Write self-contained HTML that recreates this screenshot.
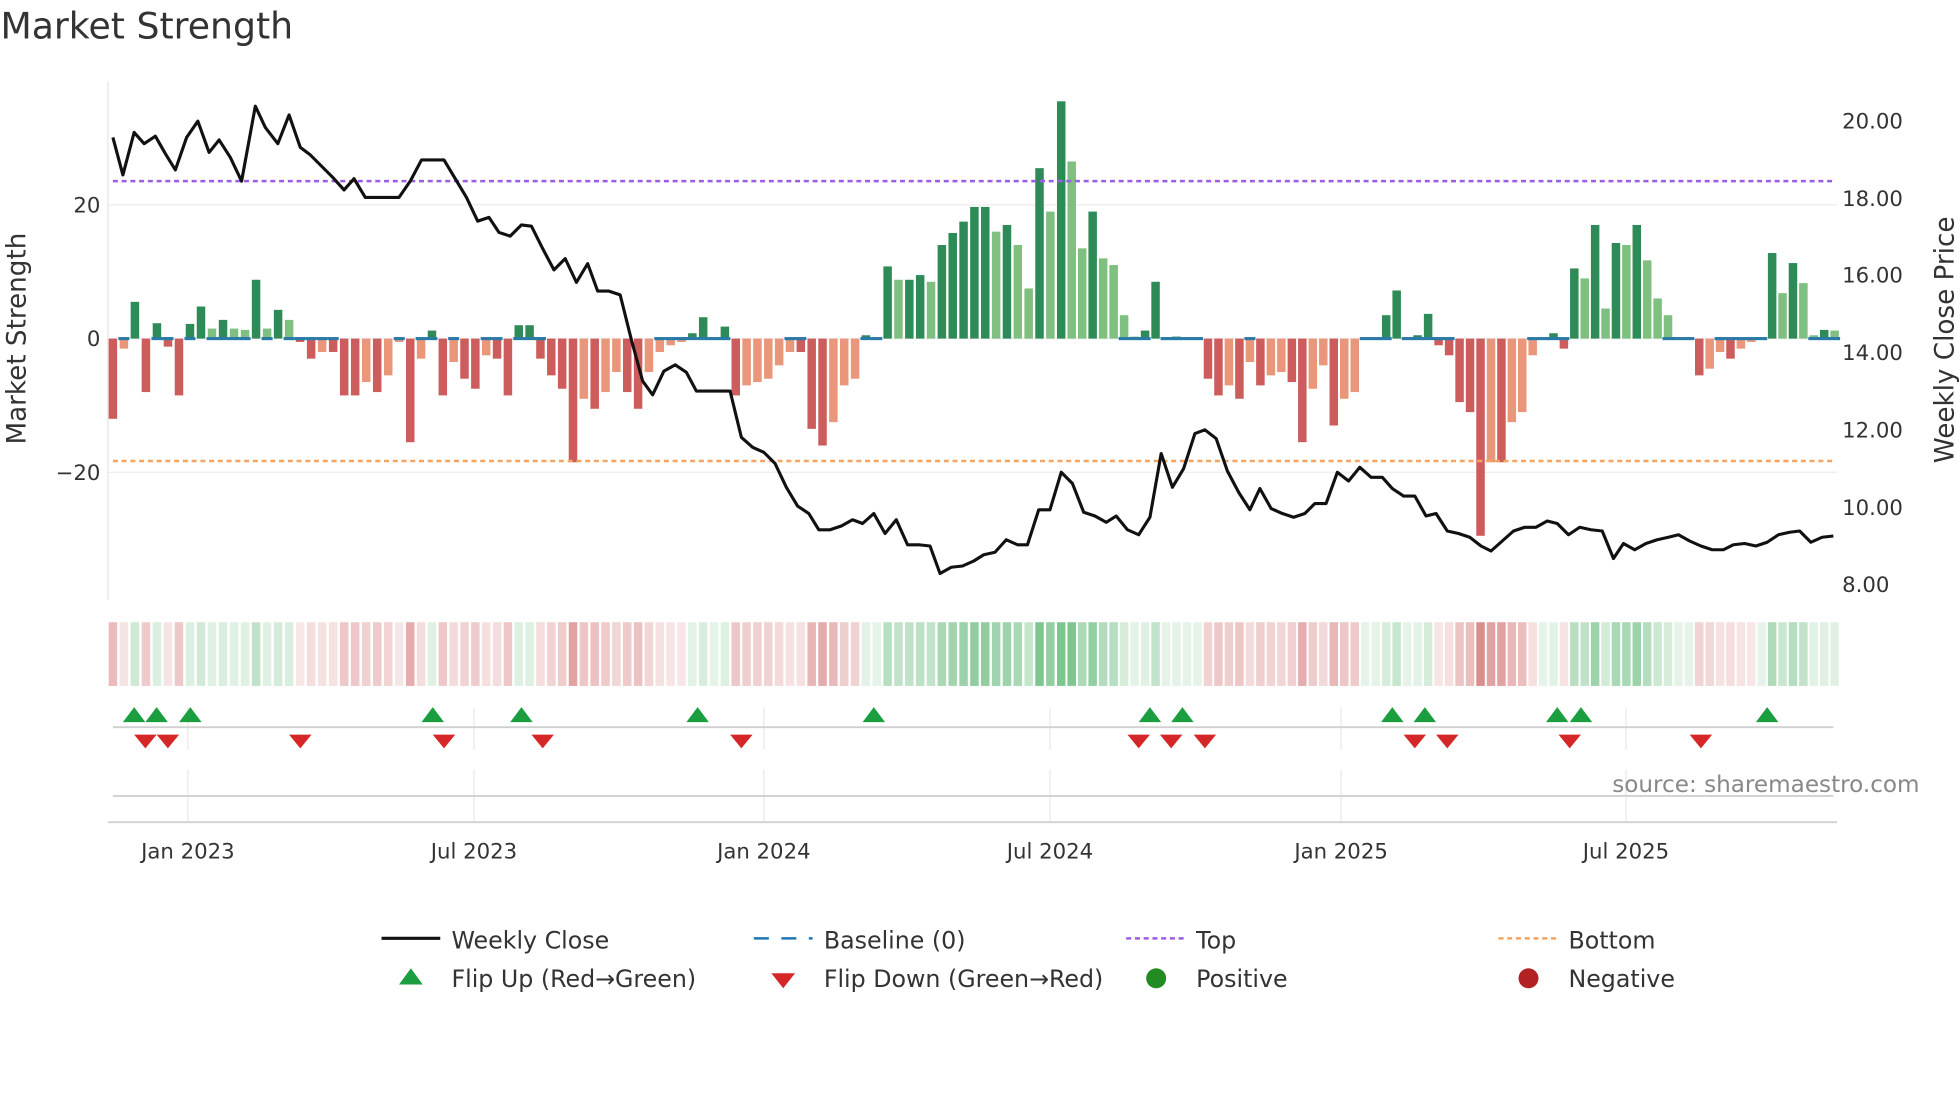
<!DOCTYPE html>
<html><head><meta charset="utf-8"><style>
html,body{margin:0;padding:0;background:#fff;width:1960px;height:1102px;overflow:hidden}
svg{display:block;font-family:"DejaVu Sans","Liberation Sans",sans-serif}
</style></head><body>
<svg id="s" width="1960" height="1102" viewBox="0 0 1568 882" xmlns="http://www.w3.org/2000/svg">
<text x="0" y="31" font-size="29" fill="#333">Market Strength</text>
<line x1="86" y1="65" x2="86" y2="480" stroke="#e6e6e6"/>
<g stroke="#ececec" stroke-width="1"><line x1="86" y1="164" x2="1470" y2="164"/><line x1="86" y1="271" x2="1470" y2="271"/><line x1="86" y1="378" x2="1470" y2="378"/></g>
<g font-size="17" fill="#333" text-anchor="end"><text x="80" y="170">20</text><text x="80" y="277">0</text><text x="80" y="384">−20</text></g>
<g font-size="17" fill="#333"><text x="1474" y="103">20.00</text><text x="1474" y="165">18.00</text><text x="1474" y="226">16.00</text><text x="1474" y="288">14.00</text><text x="1474" y="350">12.00</text><text x="1474" y="412">10.00</text><text x="1474" y="474">8.00</text></g>
<text transform="translate(20,271) rotate(-90)" font-size="21" fill="#333" text-anchor="middle">Market Strength</text>
<text transform="translate(1563,272) rotate(-90)" font-size="21" fill="#333" text-anchor="middle">Weekly Close Price</text>
<g id="bars"></g>
<line x1="90" y1="145" x2="1468" y2="145" stroke="#9b5de5" stroke-width="2" stroke-dasharray="4,3"/>
<line x1="90" y1="369" x2="1468" y2="369" stroke="#f4a460" stroke-width="2" stroke-dasharray="4,3"/>
<polyline fill="none" stroke="#111" stroke-width="2.5" stroke-linejoin="round" points="90,110 98,140 107,106 115,115 124,109 132,123 140,136 149,110 158,97 167,122 175,112 184,126 193,145 204,85 212,102 222,115 231,92 240,118 248,124 257,133 266,142 275,152 283,143 292,158 301,158 310,158 319,158 328,145 337,128 346,128 355,128 364,143 373,158 382,177 391,174 399,186 408,189 417,180 425,181 434,199 443,216 452,207 461,226 470,211 478,233 487,233 496,236 505,272 514,305 522,316 531,297 540,292 549,298 557,313 566,313 575,313 584,313 593,350 602,358 611,362 620,371 629,390 638,405 647,411 655,424 664,424 673,421 682,416 690,419 699,411 708,427 717,416 726,436 735,436 744,437 752,459 761,454 770,453 779,449 787,444 796,442 805,432 814,436 822,436 831,408 840,408 849,378 858,387 867,410 876,413 885,418 893,413 902,424 911,428 920,414 929,363 938,390 947,375 956,347 964,344 973,351 982,377 991,394 1000,408 1008,391 1017,407 1026,411 1035,414 1044,411 1052,403 1061,403 1070,378 1079,385 1088,374 1097,382 1106,382 1114,391 1123,397 1132,397 1141,413 1149,411 1158,425 1167,427 1176,430 1185,437 1193,441 1202,433 1211,425 1220,422 1229,422 1238,417 1246,419 1255,428 1264,422 1273,424 1282,425 1291,447 1299,435 1308,440 1317,435 1326,432 1335,430 1343,428 1352,433 1361,437 1370,440 1379,440 1387,436 1396,435 1405,437 1414,434 1423,428 1432,426 1440,425 1449,434 1458,430 1467,429"/>
<g id="heat"></g>
<g stroke="#e8e8e8"><line x1="150" y1="566" x2="150" y2="600"/><line x1="379" y1="566" x2="379" y2="600"/><line x1="611" y1="566" x2="611" y2="600"/><line x1="840" y1="566" x2="840" y2="600"/><line x1="1073" y1="566" x2="1073" y2="600"/><line x1="1301" y1="566" x2="1301" y2="600"/>
<line x1="150" y1="616" x2="150" y2="658"/><line x1="379" y1="616" x2="379" y2="658"/><line x1="611" y1="616" x2="611" y2="658"/><line x1="840" y1="616" x2="840" y2="658"/><line x1="1073" y1="616" x2="1073" y2="658"/><line x1="1301" y1="616" x2="1301" y2="658"/></g>
<line x1="90" y1="582" x2="1467" y2="582" stroke="#d0d0d0" stroke-width="1.5"/>
<line x1="90" y1="637" x2="1467" y2="637" stroke="#d0d0d0" stroke-width="1.5"/>
<line x1="86" y1="658" x2="1470" y2="658" stroke="#d0d0d0" stroke-width="1.5"/>
<g id="tri"></g>
<text x="1536" y="634" font-size="18.5" fill="#888" text-anchor="end">source: sharemaestro.com</text>
<g font-size="17" fill="#333" text-anchor="middle"><text x="150" y="687">Jan 2023</text><text x="379" y="687">Jul 2023</text><text x="611" y="687">Jan 2024</text><text x="840" y="687">Jul 2024</text><text x="1073" y="687">Jan 2025</text><text x="1301" y="687">Jul 2025</text></g>
<g font-size="19" fill="#333">
<line x1="305" y1="751" x2="352" y2="751" stroke="#111" stroke-width="2.5"/><text x="361" y="759">Weekly Close</text>
<line x1="603" y1="751" x2="650" y2="751" stroke="#1f77b4" stroke-width="2" stroke-dasharray="12,10"/><text x="659" y="759">Baseline (0)</text>
<line x1="901" y1="751" x2="948" y2="751" stroke="#9b5de5" stroke-width="2" stroke-dasharray="4,3"/><text x="957" y="759">Top</text>
<line x1="1199" y1="751" x2="1246" y2="751" stroke="#f4a460" stroke-width="2" stroke-dasharray="4,3"/><text x="1255" y="759">Bottom</text>
<polygon points="319,788 338,788 328.5,775" fill="#1a9e3f"/><text x="361" y="790">Flip Up (Red→Green)</text>
<polygon points="617,779 636,779 626.5,791" fill="#d62728"/><text x="659" y="790">Flip Down (Green→Red)</text>
<circle cx="925" cy="783" r="8" fill="#228b22"/><text x="957" y="790">Positive</text>
<circle cx="1223" cy="783" r="8" fill="#b22222"/><text x="1255" y="790">Negative</text>
</g>
</svg>
<script>
var v=[-12,-1.5,5.5,-8,2.3,-1.2,-8.5,2.2,4.8,1.5,2.8,1.5,1.3,8.8,1.5,4.3,2.8,-0.5,-3,-2,-2,-8.5,-8.5,-6.5,-8,-5.5,-0.5,-15.5,-3,1.2,-8.5,-3.5,-6,-7.5,-2.5,-3,-8.5,2,2,-3,-5.5,-7.5,-18.5,-9,-10.5,-8,-5,-8,-10.5,-5,-2,-1,-0.5,0.8,3.2,0,1.8,-8.5,-7,-6.5,-6,-4,-2,-2,-13.5,-16,-12.5,-7,-6,0.5,0,10.8,8.8,8.8,9.5,8.5,14,15.8,17.5,19.7,19.7,16,17,14,7.5,25.5,19,35.5,26.5,13.5,19,12,11,3.5,0.3,1.2,8.5,0,0.3,0,0,-6,-8.5,-7,-9,-3.5,-7,-5.5,-5,-6.5,-15.5,-7.5,-4,-13,-9,-8,0,0,3.5,7.2,0,0.5,3.7,-1,-2.5,-9.5,-11,-29.5,-18.5,-18.5,-12.5,-11,-2.5,0,0.8,-1.5,10.5,9,17,4.5,14.3,14,17,11.7,6,3.5,0,0,-5.5,-4.5,-2,-3,-1.5,-0.5,0,12.8,6.8,11.3,8.3,0.5,1.3,1.2];
var n=v.length,ns="http://www.w3.org/2000/svg",w=6.8;
var A=[[0,90],[27,328],[87,849],[128,1193],[n-1,1468]];
function X(i){for(var k=0;k<A.length-1;k++){if(i<=A[k+1][0]){var a=A[k],b=A[k+1];return a[1]+(i-a[0])*(b[1]-a[1])/(b[0]-a[0]);}}return 1468}
function el(p,t,a){var e=document.createElementNS(ns,t);for(var k in a)e.setAttribute(k,a[k]);p.appendChild(e);return e}
var B=document.getElementById('bars'),H=document.getElementById('heat');
for(var i=0;i<n;i++){var x=X(i),val=v[i],pv=i?v[i-1]:0,c,y=271-val*5.35;
if(val>=0)c=(val>=pv?'#2e8b57':'#7fbf7f');else c=(val<=pv?'#cd5c5c':'#e9967a');
if(Math.abs(val)>0.1)el(B,'rect',{x:x-w/2,y:Math.min(y,271),width:w,height:Math.abs(val*5.35),fill:c});
if(Math.abs(val)<4)el(B,'line',{x1:x-w/2-1,x2:x+w/2+1,y1:271,y2:271,stroke:'#2a7aa8','stroke-width':2.5});
var a=Math.min(1,0.2+Math.abs(val)/30);
el(H,'rect',{x:x-w/2,y:498,width:w,height:51,fill:val>=0?'#3aa655':'#c85050','fill-opacity':a*0.65});}
var T=document.getElementById('tri');
[107,125,152,346,417,558,699,920,946,1114,1140,1246,1265,1414].forEach(function(x){el(T,'polygon',{points:(x-9)+',578 '+(x+9)+',578 '+x+',566',fill:'#1a9e3f'})});
[116,134,240,355,434,593,911,937,964,1132,1158,1256,1361].forEach(function(x){el(T,'polygon',{points:(x-9)+',588 '+(x+9)+',588 '+x+',599',fill:'#d62728'})});
</script>
</body></html>
